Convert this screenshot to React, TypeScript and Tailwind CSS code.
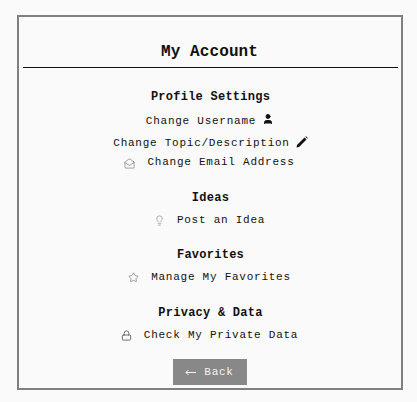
import React from "react";
import { Lock, MailOpen, Lightbulb, Star, User } from "lucide-react";

function Section({ title, className, children }: { title: string; className: string; children: React.ReactNode }) {
  return (
    <div className={`flex flex-col items-center ${className}`}>
      <h3 className="pl-[2px] text-[12px] leading-[16px] font-bold tracking-[0.25px] text-[#111]">{title}</h3>
      {children}
    </div>
  );
}

export default function App() {
  return (
    <div className="w-[417px] h-[402px] bg-[#fafafa] pt-[15px] font-['Liberation_Mono',monospace] text-[#111]">
      <div className="ml-[17px] w-[386px] h-[375px] border-[2px] border-[#808080] pl-[4px] pr-[3px] flex flex-col items-center">
        <div className="w-full h-[51px] border-b-[1px] border-[#111] flex items-end justify-center pb-[5px] pr-[2px]">
          <h1 className="text-[16px] leading-[20px] font-bold tracking-[0.1px] text-[#111]">My Account</h1>
        </div>
        <div className="w-full pt-[21px] pr-[2px] flex flex-col">
          <Section title="Profile Settings" className="mb-[20px]">
            <div className="mt-[8px] h-[16px] flex items-center text-[11px] tracking-[0.75px]">
              <span>Change Username</span>
              <User className="w-[12px] h-[12px] ml-[6px] -mr-[1px] -mt-[4px]" fill="#111" strokeWidth={2} />
            </div>
            <div className="mt-[6px] h-[16px] flex items-center text-[11px] tracking-[0.75px]">
              <span>Change Topic/Description</span>
              <svg className="ml-[6px] -mr-[2px] -mt-[3px]" width="12" height="12" viewBox="0 0 12 12" fill="#111">
                <path d="M0.5 11.5L1 9L8.5 1.5L10.5 3.5L3 11Z" />
                <path d="M9.3 0.7L10 0.2L11.8 2L11.3 2.7Z" />
              </svg>
            </div>
            <div className="mt-[3px] h-[16px] flex items-center text-[11px] tracking-[0.75px]">
              <MailOpen className="w-[11px] h-[11px] mr-[12px] mt-[3px] text-[#777]" strokeWidth={1.5} />
              <span>Change Email Address</span>
            </div>
          </Section>
          <Section title="Ideas" className="mb-[19px]">
            <div className="mt-[6px] h-[16px] flex items-center text-[11px] tracking-[0.75px]">
              <Lightbulb className="w-[11px] h-[11px] mr-[12px] text-[#888]" strokeWidth={1.5} />
              <span>Post an Idea</span>
            </div>
          </Section>
          <Section title="Favorites" className="mb-[20px]">
            <div className="mt-[6px] h-[16px] flex items-center text-[11px] tracking-[0.75px]">
              <Star className="w-[11px] h-[11px] mr-[12px] text-[#777]" strokeWidth={1.5} />
              <span>Manage My Favorites</span>
            </div>
          </Section>
          <Section title="Privacy &amp; Data" className="mb-[20px]">
            <div className="mt-[6px] h-[16px] flex items-center text-[11px] tracking-[0.75px]">
              <Lock className="w-[11px] h-[11px] mr-[12px] text-[#666]" strokeWidth={2} />
              <span>Check My Private Data</span>
            </div>
          </Section>
        </div>
        <button className="-mt-[4px] mr-[2px] w-[74px] h-[26px] bg-[#888888] text-[#f5f5f5] text-[11px] tracking-[0.75px] flex items-center justify-center gap-[8px]">
          <svg width="11" height="7" viewBox="0 0 11 7" fill="none" stroke="currentColor" strokeWidth="1">
            <path d="M11 3.5H1M3.5 1L1 3.5L3.5 6" />
          </svg>
          <span>Back</span>
        </button>
      </div>
    </div>
  );
}
